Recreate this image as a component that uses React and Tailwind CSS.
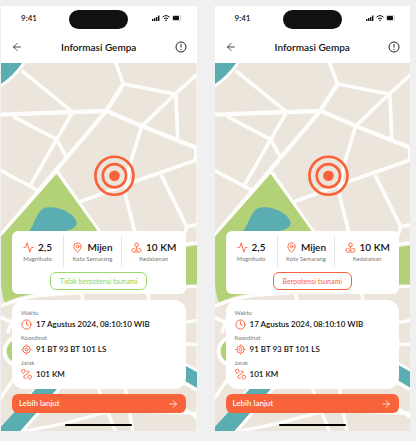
import { Activity, MapPin, ArrowLeft, ArrowRight, Clock } from "lucide-react";

function CityMap() {
  return (
    <svg className="absolute inset-0 h-full w-full" viewBox="0 0 586 1104" preserveAspectRatio="xMidYMin slice" role="img" aria-label="Peta pusat gempa">
      <rect width="586" height="1104" fill="#ece5db" />
      <path d="M-5-5H67Q40 40-5 68Z" fill="#5aaeb2" />
      <g fill="none" stroke="#fdfdfb" strokeWidth="13">
        <path d="M72-5Q40 45-8 73" strokeWidth="9" />
        <path d="M-5 155L215 147L317 144L422 189L590 256" />
        <path d="M342-5L367 63L522 93L590 32" strokeWidth="11" />
        <path d="M367 63L315 144L-10 528" />
        <path d="M522 93L422 189L385 310L372 391L402 510" strokeWidth="11" />
        <path d="M524 93L530 231M62 23L215 147L167 229L85 372M167 229L197 284M37 161L167 229M-5 320L110 382M584 255V291" strokeWidth="11" />
        <path d="M237 416L407 353L590 289M480 336L557 491L590 484M557 491L540 540" strokeWidth="11" />
        <path d="M167 325L310 530" />
        <path d="M540 545L590 538M540 672L590 668M540 780L590 771M540 842L590 844M540 1030L590 1065" strokeWidth="10" />
      </g>
      <path d="M167 333L330 560V650L107 690Q50 698 12 718Q0 690 0 650V520Z" fill="#b3d177" />
      <path d="M80 510C105 480 107 437 137 433C185 427 227 460 227 481C222 505 170 510 80 520Z" fill="#5aaeb2" />
      <path d="M540 554L590 546V664H540Z" fill="#b3d177" />
      <g fill="none" stroke="#fdfdfb" strokeWidth="11">
        <path d="M0 728Q60 705 110 697L330 682" />
        <path d="M240 680L247 720M437 675L445 720M60 705L20 810M-5 760L35 780" />
      </g>
      <circle cx="54" cy="864" r="43" fill="#b3d177" stroke="#fdfdfb" strokeWidth="12" />
      <path d="M-10 1120L120 955M-5 1010L50 930M50 1120L175 975M40 1110L190 1080L340 1040L586 1050M290 970L345 1110M370 960L395 1104M540 897L590 924M540 955L590 982" fill="none" stroke="#fdfdfb" strokeWidth="10" />
      <path d="M-5 1104V1096L115 965H178L57 1104ZM540 900L590 928V976L540 945Z" fill="#5aaeb2" />
      <g fill="none" stroke="#f9633b" strokeWidth="8">
        <circle cx="340" cy="338" r="57" />
        <circle cx="340" cy="338" r="35" />
        <circle cx="340" cy="338" r="16" fill="#f9633b" stroke="none" />
      </g>
    </svg>
  );
}

const glyph = "h-[11px] w-[11px] shrink-0 text-[#f9633b]";

function DepthIcon() {
  return (
    <svg className={glyph} viewBox="0 0 24 24" fill="none" stroke="currentColor" strokeWidth="2" strokeLinejoin="round" aria-hidden="true">
      <circle cx="12" cy="6" r="4" /><path d="M12 10v6M8 14H6q-4 0-4 4t4 4h12q4 0 4-4t-4-4h-2M8 18h8" />
    </svg>
  );
}

function CoordinateIcon() {
  return (
    <svg className={glyph} viewBox="0 0 24 24" fill="none" stroke="currentColor" strokeWidth="2" aria-hidden="true">
      <circle cx="12" cy="12" r="8" /><circle cx="12" cy="12" r="3.5" /><path d="M12 1v3M12 20v3M1 12h3M20 12h3" />
    </svg>
  );
}

function DistanceIcon() {
  return (
    <svg className={glyph} viewBox="0 0 24 24" fill="none" stroke="currentColor" strokeWidth="2" strokeLinejoin="round" aria-hidden="true">
      <path d="M5 10Q1 7 1 4.500A4 4 0 0 1 9 4.500Q9 7 5 10ZM19 23Q15 20 15 17.500A4 4 0 0 1 23 17.500Q23 20 19 23Z" />
      <path d="M12 5h4q3 0 1 3l-10 7q-3 4 1 5h4" />
    </svg>
  );
}

function Stat({ icon, value, label }) {
  return (
    <div className="flex flex-col items-center py-1">
      <dt className="order-2 text-[6px] leading-2 whitespace-nowrap text-[#777]">{label}</dt>
      <dd className="order-1 flex items-center gap-1 text-[10px] leading-4 font-semibold whitespace-nowrap">{icon}{value}</dd>
    </div>
  );
}

function Detail({ icon, label, value }) {
  return (
    <div>
      <dt className="text-[6px] leading-2 text-[#777]">{label}</dt>
      <dd className="flex items-center gap-1 text-[8px] leading-[14px] font-semibold whitespace-nowrap">{icon}{value}</dd>
    </div>
  );
}

function Phone({ status, tone }) {
  return (
    <section className="flex min-w-0 flex-1 flex-col bg-white">
      <div className="grid grid-cols-3 items-start px-[14px] pt-1">
        <span className="pt-1 pl-[6px] text-[8px] leading-2 font-semibold">9:41</span>
        <span className="h-[19px] w-[59px] justify-self-center rounded-full bg-[#111]" />
        <svg className="mt-1 h-2 w-[30px] justify-self-end" viewBox="0 0 30 8" fill="#111" aria-hidden="true">
          <path d="M0 5h1.4v2H0zM2 4h1.4v3H2zM4 3h1.4v4H4zM6 1.5h1.4V7H6z" />
          <path d="M10.5 3.2Q14 0 17.5 3.2M12 4.8Q14 3 16 4.8" fill="none" stroke="#111" strokeWidth="1" /><circle cx="14" cy="6.2" r="0.8" />
          <rect x="20.500" y="1.500" width="8" height="5" rx="1.2" fill="none" stroke="#999" strokeWidth="0.5" /><rect x="21" y="2" width="6" height="4" rx="0.7" />
        </svg>
      </div>
      <header className="flex items-center justify-between px-[10px] pt-[10px] pb-2">
        <button type="button" aria-label="Kembali"><ArrowLeft className="h-3 w-3" strokeWidth={1.5} /></button>
        <h1 className="text-[10px] leading-4 font-semibold">Informasi Gempa</h1>
        <button type="button" aria-label="Informasi">
          <svg className="h-3 w-3" viewBox="0 0 24 24" fill="none" stroke="#222" strokeWidth="2" aria-hidden="true"><circle cx="12" cy="12" r="10" /><path d="M12 6v7M12 16v2" /></svg>
        </button>
      </header>
      <main className="relative">
        <CityMap />
        <div className="relative flex flex-col px-[11px] pt-[168px]">
          <div className="flex flex-col items-center rounded-md bg-white py-1">
            <dl className="grid w-full grid-cols-[9fr_10fr_11fr] divide-x divide-gray-200">
              <Stat icon={<Activity className={glyph} />} value="2,5" label="Magnitudo" />
              <Stat icon={<MapPin className={glyph} />} value="Mijen" label="Kota Semarang" />
              <Stat icon={<DepthIcon />} value="10 KM" label="Kedalaman" />
            </dl>
            <p className={`mt-[5px] rounded-md border px-[9px] text-[7px] leading-4 ${tone}`}>{status}</p>
          </div>
          <dl className="mt-[6px] flex flex-col gap-[3px] rounded-xl bg-white px-[9px] pt-[9px] pb-2">
            <Detail icon={<Clock className={glyph} />} label="Waktu" value="17 Agustus 2024, 08:10:10 WIB" />
            <Detail icon={<CoordinateIcon />} label="Koordinat" value="91 BT 93 BT 101 LS" />
            <Detail icon={<DistanceIcon />} label="Jarak" value="101 KM" />
          </dl>
          <button type="button" className="mt-[5px] flex items-center justify-between rounded-md bg-[#f9633b] px-[7px] text-[8px] leading-[19px] font-medium text-white">Lebih lanjut<ArrowRight className="h-3 w-3" strokeWidth={1.5} /></button>
          <span className="mt-[11px] mb-[5px] h-[2px] w-[67px] self-center rounded-full bg-black" />
        </div>
      </main>
    </section>
  );
}

export default function App() {
  return (
    <div className="flex min-h-screen items-start gap-[18px] bg-[#f0f0f0] pt-[6px] pr-[6px] pb-[10px] pl-px font-['Lato',sans-serif] text-[#111]">
      <Phone status="Tidak berpotensi tsunami" tone="border-[#9bdc68] text-[#8ed657]" />
      <Phone status="Berpotensi tsunami" tone="border-[#f9633b] text-[#f9633b]" />
    </div>
  );
}
